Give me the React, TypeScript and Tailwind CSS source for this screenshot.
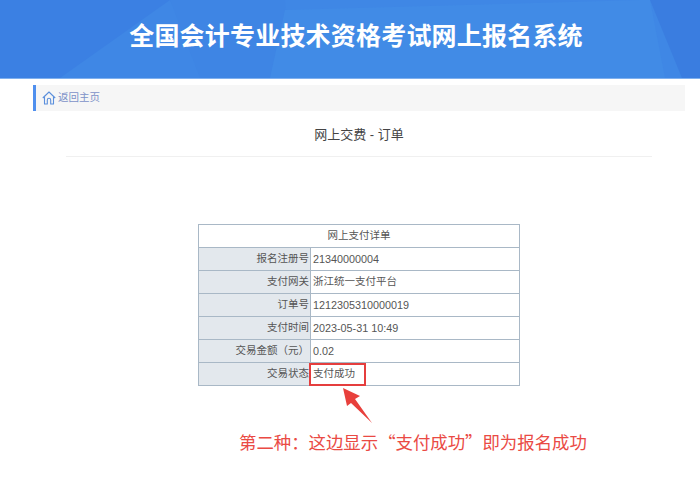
const rows = [
  { label: '报名注册号', value: '21340000004', numeric: true },
  { label: '支付网关', value: '浙江统一支付平台', numeric: false },
  { label: '订单号', value: '1212305310000019', numeric: true },
  { label: '支付时间', value: '2023-05-31 10:49', numeric: true },
  { label: '交易金额（元）', value: '0.02', numeric: true },
  { label: '交易状态', value: '支付成功', numeric: false },
]

export default function App() {
  return (
    <div className="w-[700px] h-[491px] overflow-hidden bg-white font-['Liberation_Sans','Noto_Sans_CJK_SC',sans-serif]">
      <header className="relative h-[79px] overflow-hidden bg-[#3f87e5] border-b border-[#7fb0ee] flex items-center justify-center">
        <svg className="absolute inset-0" width="700" height="78" viewBox="0 0 700 78">
          <polygon points="0,0 170,0 200,78 0,78" fill="#3b80e3" />
          <polygon points="60,78 170,0 215,78" fill="#3f87e5" />
          <polygon points="170,0 285,0 290,78 200,78" fill="#3e85e4" />
          <polygon points="285,10 640,0 650,0 665,78 270,78" fill="#418be6" />
          <polygon points="650,0 700,0 700,78 682,78" fill="#3a7de0" />
        </svg>
        <h1 className="relative text-[25px] font-bold text-white leading-none pl-[12px] mb-[6px] tracking-[0.2px]">全国会计专业技术资格考试网上报名系统</h1>
      </header>

      <div className="ml-[33px] mt-[6px] w-[652px] h-[26px] bg-[#f6f6f6] border-l-[3px] border-[#4f8fee] flex items-center pl-[6px] gap-[2px]">
        <svg width="14" height="14" viewBox="0 0 14 14" fill="none" stroke="#5b8fdc" strokeWidth="1.1" strokeLinejoin="round">
          <path d="M0.8 7 L7 1 L13.2 7" />
          <path d="M2.5 6 V13 H5.3 V9 A1.7 1.7 0 0 1 8.7 9 V13 H11.5 V6" />
        </svg>
        <span className="text-[10.5px] text-[#7d92c8]">返回主页</span>
      </div>

      <div className="mx-[66px] w-[586px] h-[46px] border-b border-[#f0f0f0] flex items-center justify-center">
        <span className="text-[13px] text-[#444] pt-[2px]">网上交费 - 订单</span>
      </div>

      <div className="relative ml-[198px] mt-[67px] w-[322px]">
        <table className="w-[321px] table-fixed border-collapse text-[10.5px] text-[#555]">
          <colgroup>
            <col className="w-[112px]" />
            <col className="w-[209px]" />
          </colgroup>
          <tbody>
            <tr className="h-[23px]">
              <td colSpan={2} className="border border-[#a9b8c6] text-center">网上支付详单</td>
            </tr>
            {rows.map((row) => (
              <tr key={row.label} className="h-[23px]">
                <td className="border border-[#a9b8c6] bg-[#e3e8ed] text-right pr-[1px]">{row.label}</td>
                <td className={row.numeric ? 'border border-[#a9b8c6] pl-[2px] text-[10.8px]' : 'border border-[#a9b8c6] pl-[2px]'}>{row.value}</td>
              </tr>
            ))}
          </tbody>
        </table>
        <div className="absolute left-[111px] top-[139px] w-[57px] h-[23px] border-2 border-[#e53e3e]" />
      </div>

      <svg className="ml-[340px] mt-[2px]" width="36" height="36" viewBox="0 0 36 36">
        <polygon points="3,0 20,8 15,11 32,35 11,15 7,18" fill="#e8403c" />
      </svg>

      <p className="ml-[239px] mt-[6px] font-['Noto_Sans_CJK_SC',sans-serif] text-[17.4px] leading-[24px] text-[#ea4a44] whitespace-nowrap">第二种：这边显示“支付成功”即为报名成功</p>
    </div>
  )
}
